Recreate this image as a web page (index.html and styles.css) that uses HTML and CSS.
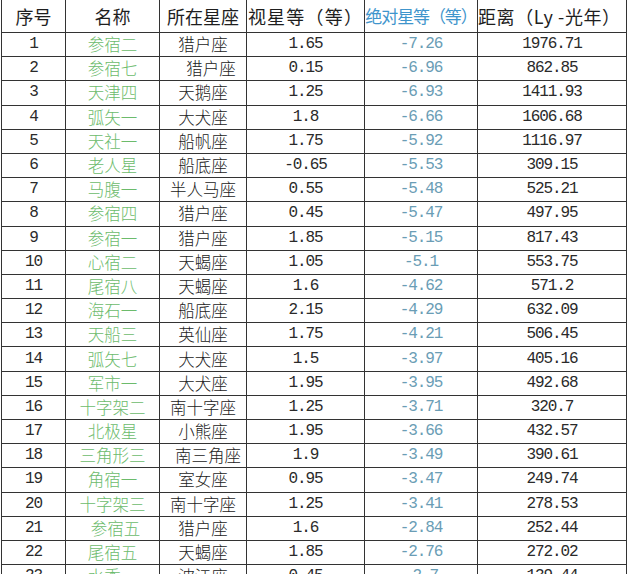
FILE: index.html
```html
<!DOCTYPE html>
<html lang="zh-CN">
<head>
<meta charset="utf-8">
<title>最亮恒星表</title>
<link rel="stylesheet" href="styles.css">
</head>
<body>
<table class="stars">
  <colgroup>
    <col class="c-no"><col class="c-name"><col class="c-con"><col class="c-app"><col class="c-abs"><col class="c-dist">
  </colgroup>
  <thead>
    <tr>
      <th>序号</th><th>名称</th><th>所在星座</th><th class="h-app">视星等（等）</th><th class="h-abs">绝对星等（等）</th><th class="h-dist">距离（Ly -光年）</th>
    </tr>
  </thead>
  <tbody>
    <tr><td class="num">1</td><td class="name">参宿二</td><td class="con">猎户座</td><td class="num">1.65</td><td class="abs">-7.26</td><td class="num">1976.71</td></tr>
    <tr><td class="num">2</td><td class="name">参宿七</td><td class="con shift">猎户座</td><td class="num">0.15</td><td class="abs">-6.96</td><td class="num">862.85</td></tr>
    <tr><td class="num">3</td><td class="name">天津四</td><td class="con">天鹅座</td><td class="num">1.25</td><td class="abs">-6.93</td><td class="num">1411.93</td></tr>
    <tr><td class="num">4</td><td class="name">弧矢一</td><td class="con">大犬座</td><td class="num">1.8</td><td class="abs">-6.66</td><td class="num">1606.68</td></tr>
    <tr><td class="num">5</td><td class="name">天社一</td><td class="con">船帆座</td><td class="num">1.75</td><td class="abs">-5.92</td><td class="num">1116.97</td></tr>
    <tr><td class="num">6</td><td class="name">老人星</td><td class="con">船底座</td><td class="num">-0.65</td><td class="abs">-5.53</td><td class="num">309.15</td></tr>
    <tr><td class="num">7</td><td class="name">马腹一</td><td class="con">半人马座</td><td class="num">0.55</td><td class="abs">-5.48</td><td class="num">525.21</td></tr>
    <tr><td class="num">8</td><td class="name">参宿四</td><td class="con">猎户座</td><td class="num">0.45</td><td class="abs">-5.47</td><td class="num">497.95</td></tr>
    <tr><td class="num">9</td><td class="name">参宿一</td><td class="con">猎户座</td><td class="num">1.85</td><td class="abs">-5.15</td><td class="num">817.43</td></tr>
    <tr><td class="num">10</td><td class="name">心宿二</td><td class="con">天蝎座</td><td class="num">1.05</td><td class="abs">-5.1</td><td class="num">553.75</td></tr>
    <tr><td class="num">11</td><td class="name">尾宿八</td><td class="con">天蝎座</td><td class="num">1.6</td><td class="abs">-4.62</td><td class="num">571.2</td></tr>
    <tr><td class="num">12</td><td class="name">海石一</td><td class="con">船底座</td><td class="num">2.15</td><td class="abs">-4.29</td><td class="num">632.09</td></tr>
    <tr><td class="num">13</td><td class="name">天船三</td><td class="con">英仙座</td><td class="num">1.75</td><td class="abs">-4.21</td><td class="num">506.45</td></tr>
    <tr><td class="num">14</td><td class="name">弧矢七</td><td class="con">大犬座</td><td class="num">1.5</td><td class="abs">-3.97</td><td class="num">405.16</td></tr>
    <tr><td class="num">15</td><td class="name">军市一</td><td class="con">大犬座</td><td class="num">1.95</td><td class="abs">-3.95</td><td class="num">492.68</td></tr>
    <tr><td class="num">16</td><td class="name">十字架二</td><td class="con">南十字座</td><td class="num">1.25</td><td class="abs">-3.71</td><td class="num">320.7</td></tr>
    <tr><td class="num">17</td><td class="name">北极星</td><td class="con">小熊座</td><td class="num">1.95</td><td class="abs">-3.66</td><td class="num">432.57</td></tr>
    <tr><td class="num">18</td><td class="name">三角形三</td><td class="con shift-sm">南三角座</td><td class="num">1.9</td><td class="abs">-3.49</td><td class="num">390.61</td></tr>
    <tr><td class="num">19</td><td class="name">角宿一</td><td class="con">室女座</td><td class="num">0.95</td><td class="abs">-3.47</td><td class="num">249.74</td></tr>
    <tr><td class="num">20</td><td class="name">十字架三</td><td class="con">南十字座</td><td class="num">1.25</td><td class="abs">-3.41</td><td class="num">278.53</td></tr>
    <tr><td class="num">21</td><td class="name nudge">参宿五</td><td class="con">猎户座</td><td class="num">1.6</td><td class="abs">-2.84</td><td class="num">252.44</td></tr>
    <tr><td class="num">22</td><td class="name">尾宿五</td><td class="con">天蝎座</td><td class="num">1.85</td><td class="abs">-2.76</td><td class="num">272.02</td></tr>
    <tr><td class="num">23</td><td class="name">水委一</td><td class="con">波江座</td><td class="num">0.45</td><td class="abs">-2.7</td><td class="num">139.44</td></tr>
  </tbody>
</table>
</body>
</html>
```

FILE: styles.css
```css
html, body {
  margin: 0;
  padding: 0;
  background: #ffffff;
}

body {
  padding-left: 1px;
  font-family: "Noto Sans CJK SC", "Noto Sans", sans-serif;
  color: #222;
}

.stars {
  border-collapse: collapse;
  table-layout: fixed;
  width: 626px;
  margin-top: -1px;
}

.c-no { width: 64px; }
.c-name { width: 94px; }
.c-con { width: 87px; }
.c-app { width: 118px; }
.c-abs { width: 113px; }
.c-dist { width: 149px; }

.stars th,
.stars td {
  border: 1px solid #333;
  padding: 0;
  text-align: center;
  white-space: nowrap;
  overflow: hidden;
}

.stars th {
  height: 32px;
  font-size: 18px;
  font-weight: 400;
  color: #1e1e1e;
  line-height: 32px;
}

.stars th.h-app {
  letter-spacing: 1.2px;
}

.stars th.h-abs {
  font-size: 17px;
  letter-spacing: -1.1px;
  color: #3f95cc;
}

.stars th.h-dist {
  letter-spacing: 0.6px;
  padding-right: 10px;
}

.stars td {
  height: 23.2px;
  line-height: 23px;
}

.num,
.abs {
  font-family: "Liberation Mono", "DejaVu Sans Mono", monospace;
  font-size: 16px;
  letter-spacing: -1.1px;
}

.num {
  color: #2a2a2a;
}

.abs {
  color: #6a9db5;
}

.name {
  font-size: 16.5px;
  font-weight: 300;
  color: #6cbb6c;
}

.con {
  font-size: 16.5px;
  font-weight: 300;
  color: #222;
}

.shift {
  padding-left: 16px !important;
}

.shift-sm {
  padding-left: 10px !important;
}

.nudge {
  padding-left: 6px !important;
}
```
